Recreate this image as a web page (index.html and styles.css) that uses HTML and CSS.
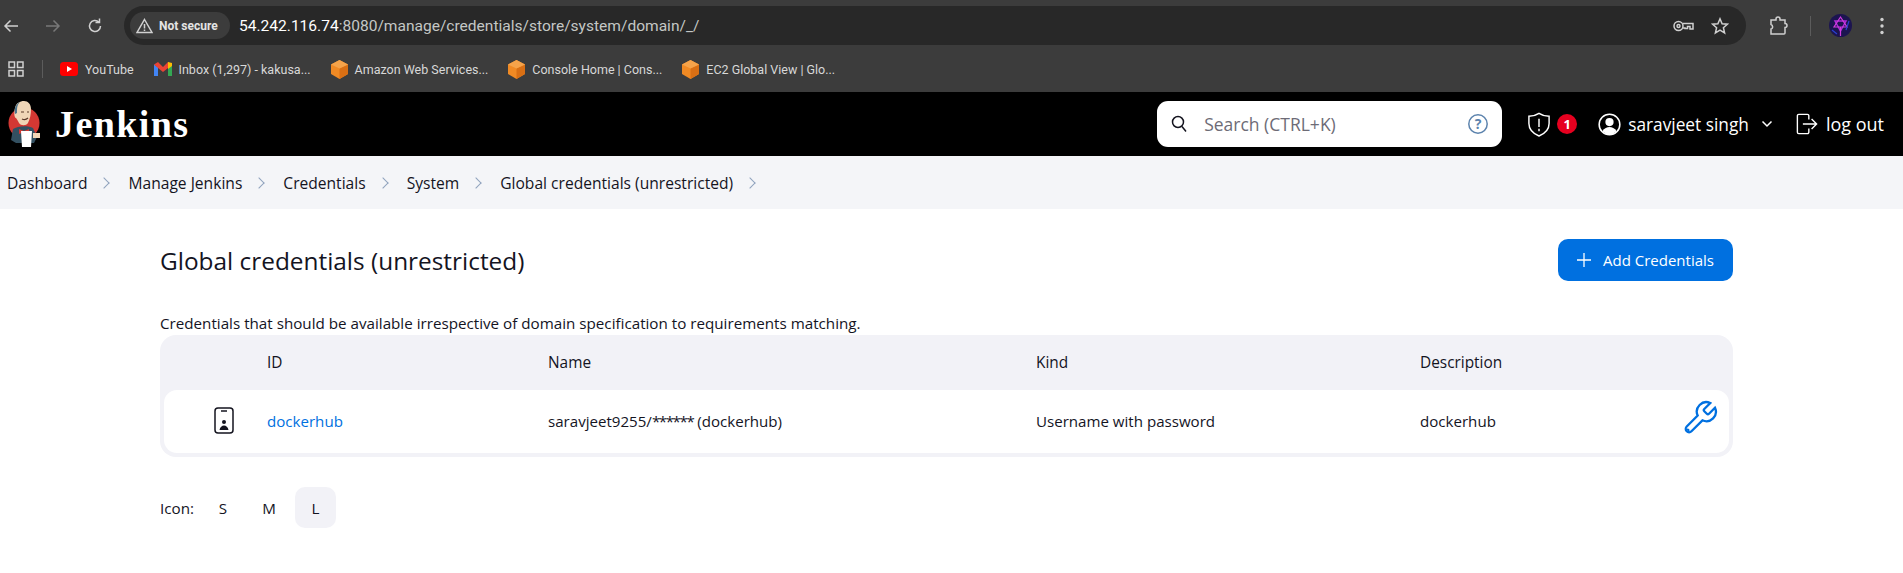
FILE: index.html
```html
<!DOCTYPE html>
<html lang="en">
  <head>
    <meta charset="UTF-8" />
    <title>Global credentials (unrestricted) [Jenkins]</title>
    <link rel="stylesheet" href="styles.css">
  </head>
  <body>
    <div class="browser">
      <div class="toolbar">
        <div class="nav-icons">
          <svg width="18" height="18" viewBox="0 0 18 18" class="nav-on"><path d="M16 9H3M8.500 3.500 3 9l5.500 5.500"/></svg>
          <svg width="18" height="18" viewBox="0 0 18 18" class="nav-off"><path d="M2 9h13M9.500 3.500 15 9l-5.500 5.500"/></svg>
          <svg width="18" height="18" viewBox="0 0 18 18" class="nav-on"><path d="M14.500 9a5.500 5.500 0 1 1-1.700-4M13.500 1.500V5.500H9.500"/></svg>
        </div>
        <div class="omnibox">
          <div class="secure-chip">
            <svg width="17" height="16" viewBox="0 0 17 16" class="nav-on"><path d="M8.500 1.500 16 14.500H1zM8.500 6v4.500M8.500 11.500v1.500"/></svg>
            <span>Not secure</span>
          </div>
          <div class="url"><b>54.242.116.74</b>:8080/manage/credentials/store/system/domain/_/</div>
          <div class="omni-right">
            <svg width="21" height="12" viewBox="0 0 21 12" class="nav-on"><circle cx="5.500" cy="6" r="4.500"/><circle cx="5.500" cy="6" r="1.500"/><path d="M10 3.500H20V9H17V6.500H14.500V8.500H12V8H10"/></svg>
            <svg width="18" height="18" viewBox="0 0 18 18" class="nav-on"><path d="M9 1.800 11.100 6.700 16.400 7.200 12.400 10.700 13.600 15.900 9 13.200 4.400 15.900 5.600 10.700 1.600 7.200 6.900 6.700z"/></svg>
          </div>
        </div>
        <div class="chrome-right">
          <svg width="20" height="19" viewBox="0 0 20 19" class="nav-on ext-icon"><path d="M2 4H7V3a2 2 0 0 1 4 0V4H16V7.500a2 2 0 0 1 0 4V17a1 1 0 0 1-1 1H2V13a2 2 0 0 0 1.500-2.500A2 2 0 0 0 2 8.500z"/></svg>
          <span class="chrome-sep"></span>
          <svg width="23" height="23" viewBox="0 0 23 23" class="avatar">
            <circle cx="11.500" cy="11.500" r="11.500" fill="#1c1450"/>
            <path d="M6 7h11l-5.500 10z" fill="none" stroke="#b02ad8" stroke-width="1.500"/>
            <path d="M5 13h13L11.500 3zM11.500 13v9" fill="none" stroke="#d23be0" stroke-width="1.200"/>
            <path d="M3 16 8 20M20 7l-3 9" stroke="#2a3fd0" stroke-width="1.200"/>
          </svg>
          <svg width="4" height="18" viewBox="0 0 4 18" class="dots"><circle cx="2" cy="2.500" r="1.700" fill="#d0d0d0"/><circle cx="2" cy="9" r="1.700" fill="#d0d0d0"/><circle cx="2" cy="15.500" r="1.700" fill="#d0d0d0"/></svg>
        </div>
      </div>
      <div class="bookmarks">
        <svg width="16" height="16" viewBox="0 0 16 16" class="nav-on apps"><rect x="1" y="1" width="5.500" height="5.500"/><rect x="9.500" y="1" width="5.500" height="5.500"/><rect x="1" y="9.500" width="5.500" height="5.500"/><rect x="9.500" y="9.500" width="5.500" height="5.500"/></svg>
        <span class="chrome-sep short"></span>
        <a class="bookmark">
          <svg width="18" height="14" viewBox="0 0 18 14"><rect width="18" height="14" rx="3.500" fill="#f00"/><path d="M7 4l5 3-5 3z" fill="#fff"/></svg>
          YouTube
        </a>
        <a class="bookmark">
          <svg width="18" height="14" viewBox="0 0 18 14"><path d="M0 2.500V14H4V5z" fill="#4285f4"/><path d="M18 2.500V14H14V5z" fill="#34a853"/><path d="M0 2.500 4 0 9 5 14 0 18 2.500 14 6 9 10 4 6z" fill="#ea4335"/><path d="M14 0 18 1V4L14 7z" fill="#fbbc04"/></svg>
          Inbox (1,297) - kakusa...
        </a>
        <a class="bookmark">
          <svg width="17" height="19" viewBox="0 0 17 19"><use href="#cube"/></svg>
          Amazon Web Services...
        </a>
        <a class="bookmark">
          <svg width="17" height="19" viewBox="0 0 17 19"><use href="#cube"/></svg>
          Console Home | Cons...
        </a>
        <a class="bookmark">
          <svg width="17" height="19" viewBox="0 0 17 19"><use href="#cube"/></svg>
          EC2 Global View | Glo...
        </a>
      </div>
    </div>

    <svg class="defs" width="0" height="0">
      <g id="cube">
        <path d="M8.500 0 17 4.500V14L8.500 19 0 14V4.500z" fill="#f08a24"/>
        <path d="M8.500 8.500 17 4.500V14L8.500 19z" fill="#d96f14"/>
        <path d="M8.500 0 17 4.500 8.500 8.500 0 4.500z" fill="#f5a34a"/>
      </g>
    </svg>

    <header class="jenkins-header">
      <a class="brand">
        <svg width="34" height="48" viewBox="0 0 34 48">
          <circle cx="17" cy="23" r="15.500" fill="#d33833"/>
          <path d="M6 29c4-3 15-4 20-1l4 9-3 6H9l-5-3z" fill="#335061"/>
          <path d="M8 8c1-5 5-7 9-7s7 3 7 8c0 5-1 10-3 14-2 3-7 3-9 0-1-2-2-4-3-5-2 0-2-7-1-10z" fill="#f0d6b7"/>
          <path d="M8 14c-1-6 1-10 5-12-3 3-3 6-3 11z" fill="#49728b"/>
          <path d="M14 12h3M20 12h2M15 19c2 1 4 1 6-1" fill="none" stroke="#5a3a2a" stroke-width="1.200"/>
          <path d="M12 29l5 2 5-2v5l-5-2-5 2z" fill="#d33833"/>
          <path d="M14 31h11l-1 16H15z" fill="#fff"/>
          <path d="M26 33h7v5h-7z" fill="#f0d6b7"/>
        </svg>
        <span>Jenkins</span>
      </a>
      <div class="header-right">
        <div class="search-box">
          <svg width="16" height="18" viewBox="0 0 16 18" class="icon-dark"><circle cx="7" cy="7" r="5.500"/><path d="M11 11.500l4 5"/></svg>
          <span class="search-hint">Search (CTRL+K)</span>
          <svg width="20" height="20" viewBox="0 0 20 20" class="help"><circle cx="10" cy="10" r="9.200"/><text x="10" y="15" text-anchor="middle">?</text></svg>
        </div>
        <a class="monitor">
          <svg width="24" height="25" viewBox="0 0 24 26" class="icon-light"><path d="M12 1.500C15 3.500 18.500 4.500 22.500 4.500V12c0 6-4.500 10.500-10.500 13C6 22.500 1.500 18 1.500 12V4.500C5.500 4.500 9 3.500 12 1.500zM12 7v8.500M12 17.500v2.500"/></svg>
          <span class="badge">1</span>
        </a>
        <a class="user">
          <svg width="23" height="23" viewBox="0 0 24 24"><circle cx="12" cy="12" r="10.800" fill="none" stroke="#fff" stroke-width="1.600"/><circle cx="12" cy="9.500" r="4.300" fill="#fff"/><path d="M4.500 19c2-3.500 5-4.500 7.500-4.500s5.500 1 7.500 4.500a10.500 10.500 0 0 1-15 0z" fill="#fff"/></svg>
          <span>saravjeet singh</span>
          <svg width="12" height="8" viewBox="0 0 12 8" class="icon-light chevron"><path d="M1.500 1.500 6 6l4.500-4.500"/></svg>
        </a>
        <a class="logout">
          <svg width="22" height="24" viewBox="0 0 24 24" class="icon-light"><path d="M14 7V3a1.500 1.500 0 0 0-1.500-1.500H3A1.500 1.500 0 0 0 1.500 3v18A1.500 1.500 0 0 0 3 22.500h9.500A1.500 1.500 0 0 0 14 21v-4M7.500 12H22.500M17 6.500 22.500 12 17 17.500"/></svg>
          <span>log out</span>
        </a>
      </div>
    </header>

    <nav class="breadcrumbs">
      <a>Dashboard</a><span class="crumb-sep"></span>
      <a>Manage Jenkins</a><span class="crumb-sep"></span>
      <a>Credentials</a><span class="crumb-sep"></span>
      <a>System</a><span class="crumb-sep"></span>
      <a>Global credentials (unrestricted)</a><span class="crumb-sep"></span>
    </nav>

    <main class="content">
      <div class="title-row">
        <h1>Global credentials (unrestricted)</h1>
        <button class="add-btn">
          <svg width="14" height="14" viewBox="0 0 14 14"><path d="M7 0v14M0 7h14" stroke="#fff" stroke-width="1.300"/></svg>
          Add Credentials
        </button>
      </div>
      <p class="intro">Credentials that should be available irrespective of domain specification to requirements matching.</p>

      <div class="cred-table">
        <div class="cred-row cred-head">
          <div></div>
          <div>ID</div>
          <div>Name</div>
          <div>Kind</div>
          <div>Description</div>
          <div></div>
        </div>
        <div class="cred-row cred-body">
          <div class="cell-icon">
            <svg width="20" height="27" viewBox="0 0 20 27" class="icon-dark"><rect x="1" y="1" width="18" height="25" rx="3"/><path d="M7 4h6"/><circle cx="10" cy="15" r="2" fill="#14141f" stroke="none"/><path d="M5.500 23c.5-3 2.500-4.500 4.500-4.500s4 1.500 4.500 4.500z" fill="#14141f" stroke="none"/></svg>
          </div>
          <div><a class="link">dockerhub</a></div>
          <div>saravjeet9255/<span class="mask">******</span> (dockerhub)</div>
          <div>Username with password</div>
          <div>dockerhub</div>
          <div class="cell-tool">
            <svg width="38" height="38" viewBox="0 0 24 24" class="wrench"><path d="M14.700 6.300a1 1 0 0 0 0 1.400l1.600 1.600a1 1 0 0 0 1.400 0l3.770-3.770a6 6 0 0 1-7.940 7.940l-6.910 6.910a2.120 2.120 0 0 1-3-3l6.910-6.910a6 6 0 0 1 7.940-7.940l-3.760 3.760z"/><circle cx="4.200" cy="19.800" r=".5"/></svg>
          </div>
        </div>
      </div>

      <div class="icon-size">
        <span class="icon-label">Icon:</span>
        <span class="size-opt">S</span>
        <span class="size-opt">M</span>
        <span class="size-opt current">L</span>
      </div>
    </main>
  </body>
</html>
```

FILE: styles.css
```css
* {
  box-sizing: border-box;
}

body {
  margin: 0;
  font-family: "Open Sans", "Noto Sans", sans-serif;
  color: #14141f;
  background: #fff;
}

a {
  text-decoration: none;
}

svg {
  display: block;
  flex: none;
}

.defs {
  position: absolute;
}

/* browser chrome */
.browser {
  height: 92px;
  background: #3c3c3c;
}

.toolbar {
  display: flex;
  align-items: center;
  height: 51px;
}

.nav-icons {
  display: flex;
  align-items: center;
  gap: 24px;
  width: 124px;
  padding-left: 2px;
}

.nav-on,
.nav-off {
  fill: none;
  stroke-width: 1.5;
}

.nav-on {
  stroke: #d0d0d0;
}

.nav-off {
  stroke: #787878;
}

.omnibox {
  display: flex;
  align-items: center;
  width: 1622px;
  height: 39px;
  padding: 0 17px 0 6px;
  border-radius: 20px;
  background: #282828;
}

.secure-chip {
  display: flex;
  align-items: center;
  gap: 6px;
  height: 27px;
  width: 100px;
  padding-left: 6px;
  border-radius: 14px;
  background: #3c3c3c;
  color: #e4e4e4;
  font: bold 12px Roboto, sans-serif;
}

.url {
  margin-left: 9px;
  color: #c4c7c5;
  font: 15.550px Roboto, sans-serif;
}

.url b {
  font-weight: 400;
  color: #fff;
}

.omni-right {
  display: flex;
  align-items: center;
  gap: 17px;
  margin-left: auto;
}

.chrome-right {
  display: flex;
  align-items: center;
  margin-left: 23px;
}

.chrome-sep {
  width: 1px;
  height: 20px;
  margin: 0 18px 0 21px;
  background: #5c5c5c;
}

.dots {
  margin-left: 28px;
}

.chrome-sep.short {
  height: 18px;
}

.bookmarks {
  display: flex;
  align-items: center;
  height: 36px;
  padding-left: 8px;
}

.bookmarks .chrome-sep {
  margin: 0 17px 0 18px;
}

.bookmark {
  display: flex;
  align-items: center;
  gap: 7px;
  margin-right: 20px;
  color: #d8d8d8;
  font: 12.500px Roboto, sans-serif;
}

/* jenkins header */
.jenkins-header {
  display: flex;
  align-items: center;
  justify-content: space-between;
  height: 64px;
  padding: 0 19px 0 7px;
  background: #000;
  color: #fff;
}

.brand {
  display: flex;
  align-items: center;
  gap: 14px;
  color: #fff;
  font: bold 38px "Liberation Serif", serif;
  letter-spacing: 1.400px;
}

.header-right {
  display: flex;
  align-items: center;
}

.search-box {
  display: flex;
  align-items: center;
  width: 345px;
  height: 46px;
  padding: 0 14px;
  border-radius: 11px;
  background: #fff;
}

.search-hint {
  margin-left: 17px;
  color: #6d6b76;
  font-size: 17.500px;
}

.help {
  margin-left: auto;
  fill: none;
  stroke: #5c83ad;
  stroke-width: 1.500;
}

.help text {
  fill: #5c83ad;
  stroke: none;
  font: bold 14px "Open Sans", sans-serif;
}

.icon-dark,
.icon-light {
  fill: none;
  stroke-width: 1.500;
}

.icon-dark {
  stroke: #14141f;
}

.icon-light {
  stroke: #fff;
}

.monitor {
  display: flex;
  align-items: center;
  gap: 6px;
  margin-left: 25px;
}

.badge {
  display: flex;
  align-items: center;
  justify-content: center;
  width: 20px;
  height: 20px;
  border-radius: 50%;
  background: #e6001f;
  color: #fff;
  font-size: 13px;
  font-weight: 700;
}

.user {
  display: flex;
  align-items: center;
  margin-left: 21px;
  gap: 7px;
  color: #fff;
  font-size: 17.300px;
  font-weight: 500;
}

.chevron {
  margin-left: 5px;
}

.logout {
  display: flex;
  align-items: center;
  gap: 8px;
  margin-left: 23px;
  color: #fff;
  font-size: 18px;
  font-weight: 500;
}

/* breadcrumbs */
.breadcrumbs {
  display: flex;
  align-items: center;
  height: 53px;
  padding-left: 7px;
  background: #f4f5f8;
  font-size: 15.600px;
  font-weight: 500;
}

.crumb-sep {
  width: 8px;
  height: 8px;
  margin: 0 20px 0 13px;
  border-top: 1.500px solid #8fa2bd;
  border-right: 1.500px solid #8fa2bd;
  transform: rotate(45deg);
}

/* main content */
.content {
  padding: 30px 170px 0 160px;
}

.title-row {
  display: flex;
  align-items: center;
  justify-content: space-between;
}

h1 {
  margin: 0;
  font-size: 24.400px;
  font-weight: 500;
}

.add-btn {
  display: flex;
  align-items: center;
  gap: 12px;
  height: 42px;
  width: 175px;
  padding: 0 0 0 19px;
  border: none;
  border-radius: 10px;
  background: #0070e0;
  color: #fff;
  font-family: inherit;
  font-size: 15px;
  font-weight: 500;
}

.intro {
  margin: 32px 0 0;
  height: 22px;
  font-size: 15.200px;
  line-height: 20px;
}

.cred-table {
  padding: 0 4px 4px;
  border-radius: 16px;
  background: #f2f2f7;
  font-size: 15.100px;
}

.cred-row {
  display: grid;
  grid-template-columns: 103px 281px 488px 384px 1fr 50px;
  align-items: center;
}

.cred-head {
  height: 55px;
  font-size: 15.400px;
  font-weight: 500;
}

.cred-body {
  height: 63px;
  padding-bottom: 2px;
  border-radius: 13px;
  background: #fff;
}

.mask {
  letter-spacing: -1.400px;
}

.cell-icon {
  display: flex;
  justify-content: flex-end;
  padding-right: 33px;
}

.link {
  color: #0070e0;
}

.wrench {
  fill: none;
  stroke: #0070e0;
  stroke-width: 1.450;
}

.cell-tool {
  display: flex;
  margin-top: -5px;
  padding-left: 2px;
}

.icon-size {
  display: flex;
  align-items: center;
  margin-top: 30px;
  font-size: 15.200px;
}

.icon-label {
  width: 40px;
}

.size-opt {
  display: flex;
  align-items: center;
  justify-content: center;
  width: 46px;
  height: 41px;
  border-radius: 10px;
}

.size-opt.current {
  width: 41px;
  margin-left: 3px;
  background: #f2f2f7;
}
```
